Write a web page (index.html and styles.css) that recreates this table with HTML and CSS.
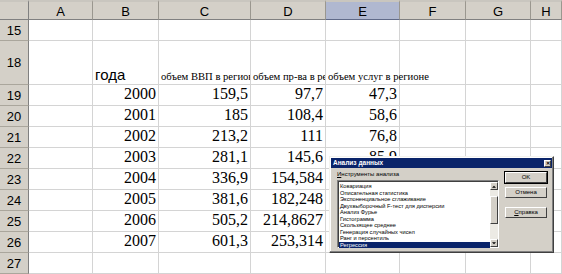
FILE: index.html
```html
<!DOCTYPE html>
<html>
<head>
<meta charset="utf-8">
<link rel="stylesheet" href="styles.css">
</head>
<body>
<div class="sheet">
  <div class="corner"></div>
  <div class="ch">A</div><div class="ch">B</div><div class="ch">C</div><div class="ch">D</div><div class="ch sel">E</div><div class="ch">F</div><div class="ch">G</div><div class="ch">H</div>

  <div class="rh">15</div>
  <div class="c"></div><div class="c"></div><div class="c"></div><div class="c"></div><div class="c"></div><div class="c"></div><div class="c"></div><div class="c"></div>

  <div class="rh">18</div>
  <div class="c"></div><div class="c txt">года</div><div class="c hd clip">объем ВВП в регионе</div><div class="c hd clip">объем пр-ва в регионе</div><div class="c hd">объем услуг в регионе</div><div class="c"></div><div class="c"></div><div class="c"></div>

  <div class="rh">19</div>
  <div class="c"></div><div class="c n">2000</div><div class="c n">159,5</div><div class="c n">97,7</div><div class="c n">47,3</div><div class="c"></div><div class="c"></div><div class="c"></div>

  <div class="rh">20</div>
  <div class="c"></div><div class="c n">2001</div><div class="c n">185</div><div class="c n">108,4</div><div class="c n">58,6</div><div class="c"></div><div class="c"></div><div class="c"></div>

  <div class="rh">21</div>
  <div class="c"></div><div class="c n">2002</div><div class="c n">213,2</div><div class="c n">111</div><div class="c n">76,8</div><div class="c"></div><div class="c"></div><div class="c"></div>

  <div class="rh">22</div>
  <div class="c"></div><div class="c n">2003</div><div class="c n">281,1</div><div class="c n">145,6</div><div class="c n">85,9</div><div class="c"></div><div class="c"></div><div class="c"></div>

  <div class="rh">23</div>
  <div class="c"></div><div class="c n">2004</div><div class="c n">336,9</div><div class="c n">154,584</div><div class="c n"></div><div class="c"></div><div class="c"></div><div class="c"></div>

  <div class="rh">24</div>
  <div class="c"></div><div class="c n">2005</div><div class="c n">381,6</div><div class="c n">182,248</div><div class="c n"></div><div class="c"></div><div class="c"></div><div class="c"></div>

  <div class="rh">25</div>
  <div class="c"></div><div class="c n">2006</div><div class="c n">505,2</div><div class="c n">214,8627</div><div class="c n"></div><div class="c"></div><div class="c"></div><div class="c"></div>

  <div class="rh">26</div>
  <div class="c"></div><div class="c n">2007</div><div class="c n">601,3</div><div class="c n">253,314</div><div class="c n"></div><div class="c"></div><div class="c"></div><div class="c"></div>

  <div class="rh">27</div>
  <div class="c"></div><div class="c"></div><div class="c"></div><div class="c"></div><div class="c"></div><div class="c"></div><div class="c"></div><div class="c"></div>
</div>

<div class="dialog">
  <div class="titlebar">
    <span class="title">Анализ данных</span>
    <span class="close">✕</span>
  </div>
  <div class="dbody">
    <div class="left">
      <div class="label"><u>И</u>нструменты анализа</div>
      <div class="listbox">
        <div class="items">
          <div class="item">Ковариация</div>
          <div class="item">Описательная статистика</div>
          <div class="item">Экспоненциальное сглаживание</div>
          <div class="item">Двухвыборочный F-тест для дисперсии</div>
          <div class="item">Анализ Фурье</div>
          <div class="item">Гистограмма</div>
          <div class="item">Скользящее среднее</div>
          <div class="item">Генерация случайных чисел</div>
          <div class="item">Ранг и персентиль</div>
          <div class="item active">Регрессия</div>
        </div>
        <div class="scroll">
          <div class="arrow"><svg width="6" height="4" viewBox="0 0 6 4"><path d="M0 4 L3 1 L6 4 Z" fill="#000"/></svg></div>
          <div class="track"><div class="thumb"></div></div>
          <div class="arrow"><svg width="6" height="4" viewBox="0 0 6 4"><path d="M0 0 L6 0 L3 3 Z" fill="#000"/></svg></div>
        </div>
      </div>
    </div>
    <div class="buttons">
      <div class="btn def">OK</div>
      <div class="btn">Отмена</div>
      <div class="btn gap"><u>С</u>правка</div>
    </div>
  </div>
</div>
</body>
</html>
```
FILE: styles.css
```css
html, body {
  margin: 0;
  padding: 0;
  background: #fff;
  overflow: hidden;
}
body {
  width: 562px;
  height: 274px;
  position: relative;
}
.sheet {
  display: grid;
  grid-template-columns: 29px 64px 66px 92px 75px 74px 66px 65px 31px;
  grid-template-rows: 20px 21px 44px repeat(9, 21px);
  width: 562px;
  height: 274px;
}
.corner, .ch, .rh {
  background: #d4d0c8;
  font-family: "Liberation Sans", Arial, sans-serif;
  font-size: 13px;
  color: #000;
  box-sizing: border-box;
}
.corner {
  border-right: 1px solid #808080;
  border-bottom: 1px solid #808080;
  border-top: 2px solid #c9c6bf;
}
.ch {
  border-top: 2px solid #c9c6bf;
  border-right: 1px solid #9a978f;
  border-bottom: 1px solid #808080;
  display: flex;
  align-items: center;
  justify-content: center;
  line-height: 1;
  padding-top: 1px;
}
.ch.sel {
  background: #b0b8d0;
  border-bottom: 1px solid #606a88;
}
.rh {
  border-right: 1px solid #808080;
  border-bottom: 1px solid #aaa69c;
  display: flex;
  align-items: center;
  justify-content: center;
  line-height: 1;
}
.c {
  box-sizing: border-box;
  border-right: 1px solid #d4d4d4;
  border-bottom: 1px solid #d4d4d4;
  white-space: nowrap;
  display: flex;
  align-items: flex-end;
  min-width: 0;
}
.txt {
  font-family: "Liberation Sans", Arial, sans-serif;
  font-size: 15px;
  padding: 0 0 1px 2px;
  line-height: 17px;
}
.hd {
  font-family: "Liberation Serif", "Times New Roman", serif;
  font-size: 10.6px;
  line-height: 12px;
  padding: 0 0 1px 2px;
  position: relative;
  z-index: 1;
}
.clip {
  overflow: hidden;
}
.n {
  font-family: "Liberation Serif", "Times New Roman", serif;
  font-size: 16px;
  line-height: 16px;
  justify-content: flex-end;
  padding: 0 2px 3px 0;
}

/* dialog */
.dialog {
  position: absolute;
  left: 329px;
  top: 156px;
  width: 225px;
  height: 97px;
  box-sizing: border-box;
  background: #d4d0c8;
  border: 1px solid;
  border-color: #f4f3ee #404040 #404040 #f4f3ee;
  box-shadow: inset -1px -1px 0 #808080, inset 1px 1px 0 #fff;
  padding: 1px;
  font-family: "Liberation Sans", Arial, sans-serif;
  display: flex;
  flex-direction: column;
}
.titlebar {
  height: 10px;
  background: #0a246a;
  display: flex;
  align-items: center;
  justify-content: space-between;
  padding: 0 1px 0 2px;
}
.title {
  color: #fff;
  font-weight: bold;
  font-size: 6.5px;
  line-height: 8px;
}
.close {
  width: 7px;
  height: 7px;
  background: #d4d0c8;
  box-sizing: border-box;
  border: 1px solid;
  border-color: #fff #404040 #404040 #fff;
  font-size: 5px;
  line-height: 5px;
  text-align: center;
  color: #000;
  font-weight: bold;
}
.dbody {
  flex: 1;
  display: flex;
  padding: 3px 0 0 6px;
  gap: 6px;
}
.left {
  display: flex;
  flex-direction: column;
}
.label {
  font-size: 6px;
  line-height: 7px;
  height: 9px;
  color: #000;
}
.listbox {
  width: 162px;
  height: 68px;
  box-sizing: border-box;
  background: #fff;
  border: 1px solid;
  border-color: #808080 #fff #fff #808080;
  box-shadow: inset 1px 1px 0 #404040;
  display: flex;
  padding: 1px 0 0 1px;
}
.items {
  flex: 1;
  display: flex;
  flex-direction: column;
  padding-top: 1px;
}
.item {
  font-size: 5.7px;
  line-height: 6.5px;
  height: 6.5px;
  padding-left: 1px;
  color: #000;
  white-space: nowrap;
}
.item.active {
  background: #0a246a;
  color: #fff;
}
.scroll {
  width: 8px;
  display: flex;
  flex-direction: column;
  background: #eceae4;
}
.arrow {
  height: 8px;
  box-sizing: border-box;
  background: #d4d0c8;
  border: 1px solid;
  border-color: #fff #404040 #404040 #fff;
  display: flex;
  align-items: center;
  justify-content: center;
}
.arrow svg {
  width: 4px;
  height: 3px;
}
.track {
  flex: 1;
  display: flex;
  flex-direction: column;
  justify-content: flex-end;
  padding-bottom: 15px;
}
.thumb {
  height: 28px;
  background: #d4d0c8;
  box-sizing: border-box;
  border: 1px solid;
  border-color: #fff #404040 #404040 #fff;
}
.buttons {
  display: flex;
  flex-direction: column;
  gap: 4px;
  padding-top: 1px;
}
.btn {
  width: 42px;
  height: 11px;
  box-sizing: border-box;
  background: #d4d0c8;
  border: 1px solid;
  border-color: #fff #404040 #404040 #fff;
  font-size: 6px;
  line-height: 9px;
  text-align: center;
  color: #000;
}
.btn.def {
  outline: 1px solid #000;
  outline-offset: 0;
}
.btn.gap {
  margin-top: 5px;
}
```
